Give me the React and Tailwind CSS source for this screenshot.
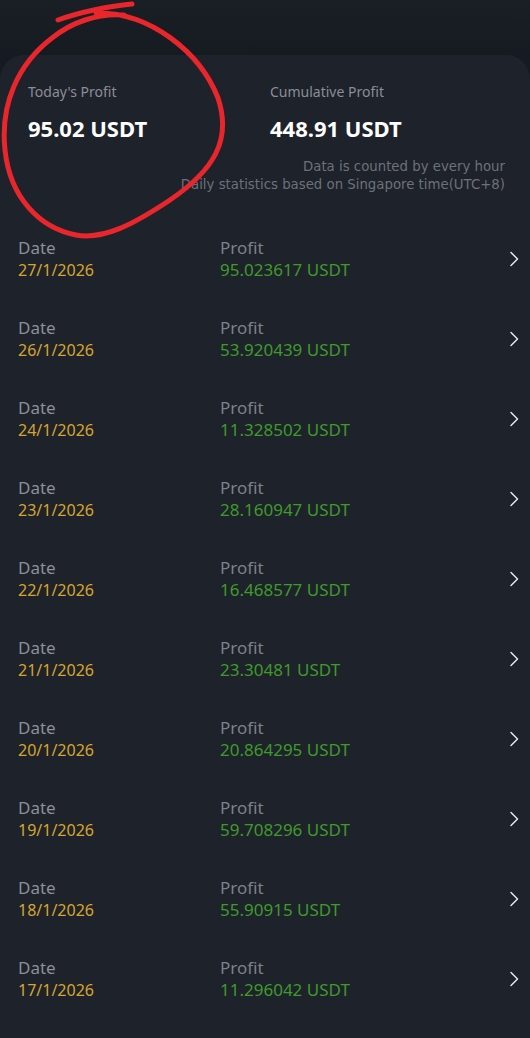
import React from "react";

const rows = [
  { date: "27/1/2026", profit: "95.023617" },
  { date: "26/1/2026", profit: "53.920439" },
  { date: "24/1/2026", profit: "11.328502" },
  { date: "23/1/2026", profit: "28.160947" },
  { date: "22/1/2026", profit: "16.468577" },
  { date: "21/1/2026", profit: "23.30481" },
  { date: "20/1/2026", profit: "20.864295" },
  { date: "19/1/2026", profit: "59.708296" },
  { date: "18/1/2026", profit: "55.90915" },
  { date: "17/1/2026", profit: "11.296042" },
];

const Chevron = () => (
  <svg width="12" height="16" viewBox="0 0 12 16" fill="none">
    <path d="M3 1.5 L9.5 8 L3 14.5" stroke="#e6e8eb" strokeWidth="1.5" strokeLinecap="round" strokeLinejoin="round" />
  </svg>
);

const Row = ({ date, profit }) => (
  <div className="flex h-[80px] items-center pl-[18px] pr-[10px]">
    <div className="w-[202px] leading-[22px]">
      <div className="text-[17px] text-[#8c9098]">Date</div>
      <div className="text-[16px] text-[#d6a52c]">{date}</div>
    </div>
    <div className="flex-1 leading-[22px] text-[17px]">
      <div className="text-[#7d8189]">Profit</div>
      <div className="text-[#3e9a29]">{profit} USDT</div>
    </div>
    <Chevron />
  </div>
);

export default function App() {
  return (
    <div className="relative w-[530px] min-h-[1038px] bg-[#161a21] overflow-hidden" style={{ fontFamily: '"Noto Sans", sans-serif' }}>
      <div className="h-[55px] bg-gradient-to-b from-[#1a1e25] to-[#161a21]" />
      <div className="rounded-t-[24px] bg-[#1e222b] min-h-[983px]">
        {/* summary */}
        <div className="pt-[27px] pb-[25px]">
          <div className="flex">
            <div className="w-[270px] pl-[28px]">
              <div className="text-[14px] leading-[20px] text-[#8a8e96]">Today's Profit</div>
              <div className="mt-[12px] text-[22px] leading-[28px] font-bold text-white">95.02 USDT</div>
            </div>
            <div>
              <div className="text-[14px] leading-[20px] text-[#8a8e96]">Cumulative Profit</div>
              <div className="mt-[12px] text-[22px] leading-[28px] font-bold text-white">448.91 USDT</div>
            </div>
          </div>
          <div className="mt-[16px] pr-[25px] text-right text-[13.3px] leading-[18px] text-[#6d7179]" style={{ fontFamily: '"DejaVu Sans", sans-serif' }}>
            <div>Data is counted by every hour</div>
            <div>Daily statistics based on Singapore time(UTC+8)</div>
          </div>
        </div>
        {/* history */}
        <div>
          {rows.map((r) => (
            <Row key={r.date} {...r} />
          ))}
        </div>
      </div>

      {/* hand-drawn red marker circle */}
      <svg className="absolute left-0 top-0 pointer-events-none" width="240" height="245" viewBox="0 0 240 245" fill="none">
        <path d="M58 20 C80 12 110 6 132 4" stroke="#e8262b" strokeWidth="5" strokeLinecap="round" />
        <path
          d="M96 13 C150 12 200 52 218 98 C232 140 214 170 170 200 C134 224 104 240 76 235 C40 228 10 198 5 150 C0 104 18 64 52 38 C72 22 98 13 124 15"
          stroke="#e8262b"
          strokeWidth="5"
          strokeLinecap="round"
        />
      </svg>
    </div>
  );
}
